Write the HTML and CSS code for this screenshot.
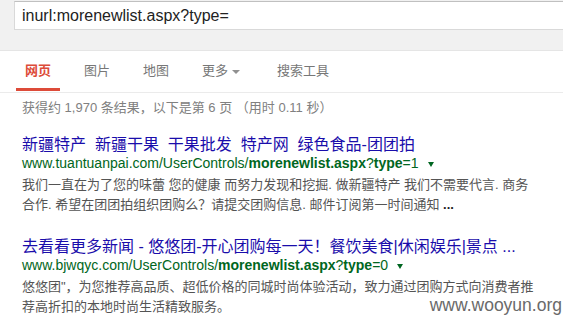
FILE: index.html
```html
<!DOCTYPE html>
<html lang="zh-CN">
<head>
    <meta charset="UTF-8">
    <meta name="viewport" content="width=device-width, initial-scale=1.0">
    <title>inurl:morenewlist.aspx?type=</title>
    <link rel="stylesheet" href="styles.css">
</head>
<body>
    <div class="header">
        <div class="search-box">inurl:morenewlist.aspx?type=</div>
    </div>

    <div class="tabs">
        <div class="tab active">网页</div>
        <div class="tab">图片</div>
        <div class="tab">地图</div>
        <div class="tab">更多<span class="tab-arrow"></span></div>
        <div class="tab">搜索工具</div>
    </div>

    <div class="content">
        <div class="stats">获得约 1,970 条结果，以下是第 6 页 （用时 0.11 秒）</div>

        <div class="result">
            <div class="result-title">新疆特产&nbsp; 新疆干果&nbsp; 干果批发&nbsp; 特产网&nbsp; 绿色食品-团团拍</div>
            <div class="result-url">www.tuantuanpai.com/UserControls/<b>morenewlist.aspx</b>?<b>type</b>=1<span class="url-arrow"></span></div>
            <div class="result-snippet">我们一直在为了您的味蕾 您的健康 而努力发现和挖掘. 做新疆特产 我们不需要代言. 商务<br>合作. 希望在团团拍组织团购么？请提交团购信息. 邮件订阅第一时间通知 <b>...</b></div>
        </div>

        <div class="result">
            <div class="result-title">去看看更多新闻 - 悠悠团-开心团购每一天！餐饮美食|休闲娱乐|景点 ...</div>
            <div class="result-url">www.bjwqyc.com/UserControls/<b>morenewlist.aspx</b>?<b>type</b>=0<span class="url-arrow"></span></div>
            <div class="result-snippet">悠悠团"，为您推荐高品质、超低价格的同城时尚体验活动，致力通过团购方式向消费者推<br>荐高折扣的本地时尚生活精致服务。</div>
        </div>
    </div>

    <div class="watermark">www.wooyun.org</div>
</body>
</html>
```

FILE: styles.css
```css
body {
    font-family: "Liberation Sans", Arial, "Noto Sans CJK SC", sans-serif;
    margin: 0;
    padding: 0;
    background-color: #ffffff;
    position: relative;
    height: 318px;
    overflow: hidden;
}
.header {
    background-color: #f1f1f1;
    border-bottom: 1px solid #e5e5e5;
    padding: 1px 0 0 14px;
    box-sizing: border-box;
    height: 51px;
}
.search-box {
    background-color: #ffffff;
    border: 1px solid #d9d9d9;
    border-top-color: #c0c0c0;
    border-right: none;
    height: 29px;
    box-sizing: border-box;
    padding: 0 0 0 7px;
    font-size: 16px;
    line-height: 27px;
    color: #222222;
}
.tabs {
    display: flex;
    gap: 15px;
    padding: 0 0 1px 16px;
    border-bottom: 1px solid #ebebeb;
}
.tab {
    padding: 11px 9px 8px;
    font-size: 13px;
    line-height: 18px;
    color: #777777;
    border-bottom: 3px solid transparent;
    display: flex;
    align-items: center;
}
.tab.active {
    color: #dd4b39;
    font-weight: bold;
    border-bottom-color: #dd4b39;
}
.tab-arrow {
    display: inline-block;
    width: 0;
    height: 0;
    border-top: 4px solid #909090;
    border-left: 4px solid transparent;
    border-right: 4px solid transparent;
    margin: 1px 4px 0 4px;
}
.content {
    padding-left: 22px;
    width: 520px;
}
.stats {
    margin-top: 6px;
    font-size: 13px;
    line-height: 18px;
    color: #808080;
}
.result {
    margin-top: 18px;
}
.result + .result {
    margin-top: 22px;
}
.result-title {
    font-size: 16px;
    line-height: 19px;
    color: #1a0dab;
    white-space: nowrap;
}
.result-url {
    font-size: 14px;
    line-height: 19px;
    color: #006621;
    white-space: nowrap;
}
.url-arrow {
    display: inline-block;
    width: 0;
    height: 0;
    border-top: 5px solid #006621;
    border-left: 3px solid transparent;
    border-right: 3px solid transparent;
    margin-left: 9px;
    vertical-align: middle;
}
.result-snippet {
    margin-top: 2px;
    font-size: 13px;
    line-height: 20px;
    color: #545454;
    white-space: nowrap;
}
.result-snippet b {
    color: #222222;
}
.watermark {
    position: absolute;
    right: 1px;
    top: 295px;
    font-size: 17.5px;
    line-height: 20px;
    color: #6a6a6a;
}
```
